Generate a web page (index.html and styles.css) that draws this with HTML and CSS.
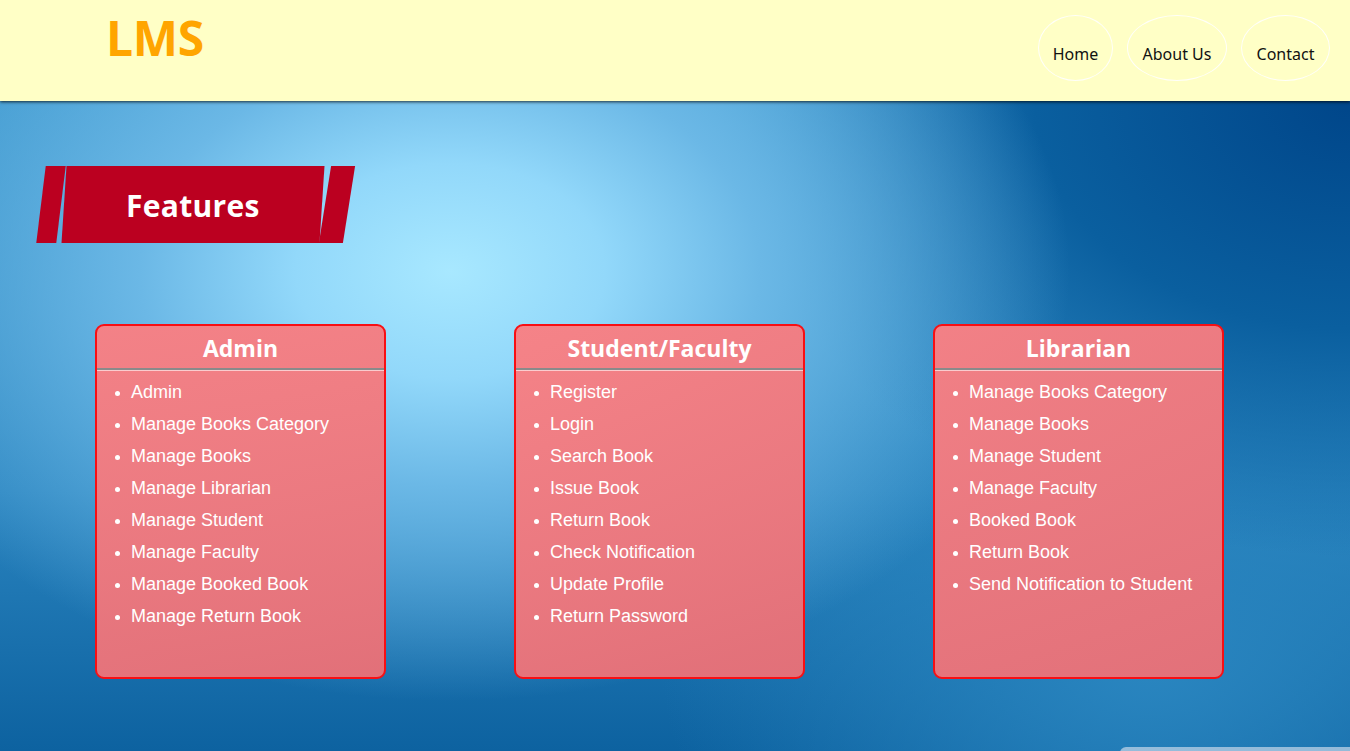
FILE: index.html
```html
<!DOCTYPE html>
<html>
<head>
<meta charset="utf-8">
<link rel="stylesheet" href="styles.css">
</head>
<body>
<header class="topbar">
  <div class="logo">LMS</div>
  <nav class="nav">
    <a class="nav-item nav-home" href="#">Home</a>
    <a class="nav-item nav-about" href="#">About Us</a>
    <a class="nav-item nav-contact" href="#">Contact</a>
  </nav>
</header>
<main class="main">
  <div class="banner">
    <span class="stripe stripe-left"></span>
    <span class="banner-main"><span class="banner-text">Features</span></span>
    <span class="stripe stripe-right"></span>
  </div>
  <section class="cards">
    <div class="card">
      <h2 class="card-title">Admin</h2>
      <ul class="card-list">
        <li>Admin</li>
        <li>Manage Books Category</li>
        <li>Manage Books</li>
        <li>Manage Librarian</li>
        <li>Manage Student</li>
        <li>Manage Faculty</li>
        <li>Manage Booked Book</li>
        <li>Manage Return Book</li>
      </ul>
    </div>
    <div class="card">
      <h2 class="card-title">Student/Faculty</h2>
      <ul class="card-list">
        <li>Register</li>
        <li>Login</li>
        <li>Search Book</li>
        <li>Issue Book</li>
        <li>Return Book</li>
        <li>Check Notification</li>
        <li>Update Profile</li>
        <li>Return Password</li>
      </ul>
    </div>
    <div class="card">
      <h2 class="card-title">Librarian</h2>
      <ul class="card-list">
        <li>Manage Books Category</li>
        <li>Manage Books</li>
        <li>Manage Student</li>
        <li>Manage Faculty</li>
        <li>Booked Book</li>
        <li>Return Book</li>
        <li>Send Notification to Student</li>
      </ul>
    </div>
  </section>
  <div class="watermark"></div>
</main>
</body>
</html>
```
FILE: styles.css
```css
* { box-sizing: border-box; }
html, body { margin: 0; padding: 0; }
body {
  width: 1350px;
  height: 751px;
  overflow: hidden;
  font-family: "Liberation Sans", Arial, sans-serif;
  background: #0a5c9a;
}
.topbar {
  position: relative;
  z-index: 2;
  height: 101px;
  background: #ffffc6;
  box-shadow: 0 1px 3px rgba(0,0,0,0.75);
  display: flex;
  justify-content: space-between;
  align-items: flex-start;
  padding: 0 20px 0 106px;
}
.logo {
  font-family: "Open Sans", "Noto Sans", sans-serif;
  font-weight: 700;
  font-size: 48px;
  color: #ffa500;
  line-height: 1;
  margin-top: 14px;
  letter-spacing: -0.3px;
}
.nav {
  display: flex;
  gap: 14px;
  margin-top: 15px;
}
.nav-item {
  display: flex;
  align-items: center;
  justify-content: center;
  height: 66px;
  border: 1px solid rgba(255,255,255,0.9);
  border-radius: 50%;
  color: #111;
  text-decoration: none;
  font-family: "Noto Sans", "Open Sans", sans-serif;
  font-size: 16px;
  padding-top: 11px;
}
.nav-home { width: 75px; }
.nav-about { width: 100px; }
.nav-contact { width: 89px; }

.main {
  position: relative;
  height: 650px;
  background:
    radial-gradient(ellipse 620px 430px at 450px 170px, #a8e8ff 0%, #92d8fa 25%, #6bb8e6 50%, rgba(40,130,190,0) 100%),
    radial-gradient(ellipse 900px 650px at 1350px 0px, #00468a 0%, #0a5f9f 35%, rgba(20,110,175,0) 70%),
    radial-gradient(ellipse 700px 500px at 1150px 560px, #2a86c0 0%, rgba(40,140,200,0) 70%),
    linear-gradient(180deg, #3b96cc 0%, #2a84bf 60%, #0d62a0 100%);
  padding-top: 65px;
}
.banner {
  display: flex;
  align-items: stretch;
  height: 77px;
  margin-left: 41px;
  gap: 3px;
}
.stripe, .banner-main {
  background: #bb0020;
  transform: skewX(-7deg);
}
.stripe-left { width: 20px; }
.stripe-right { width: 24px; transform: skewX(-9deg); }
.banner-main {
  width: 258px;
  display: flex;
  align-items: center;
  justify-content: center;
  transform: skewX(-3.7deg);
}
.banner-text {
  transform: skewX(3.7deg);
  color: #fff;
  font-family: "Open Sans", "Noto Sans", sans-serif;
  font-weight: 700;
  font-size: 30px;
  letter-spacing: 0.3px;
  margin-top: 2px;
}
.cards {
  display: flex;
  gap: 128px;
  margin-top: 81px;
  padding-left: 95px;
}
.card {
  width: 291px;
  height: 355px;
  border: 2px solid #f80f14;
  border-radius: 9px;
  background: linear-gradient(160deg, rgba(248,128,132,0.97) 0%, rgba(236,112,118,0.95) 100%);
  overflow: hidden;
}
.card-title {
  margin: 0;
  padding-top: 2px;
  text-align: center;
  color: #fff;
  font-family: "Open Sans", "Noto Sans", sans-serif;
  font-weight: 700;
  font-size: 23px;
  line-height: 40px;
  border-bottom: 2px solid #8a8a8a;
  box-shadow: 0 1px 0 rgba(255,255,255,0.6);
}
.card-list {
  margin: 0;
  padding: 6px 0 0 34px;
  color: #fff;
  font-size: 18px;
  line-height: 32px;
}
.card-list li::marker { font-size: 16px; }
.watermark {
  position: absolute;
  right: 0;
  bottom: -6px;
  width: 230px;
  height: 10px;
  border-radius: 6px 0 0 0;
  background: rgba(170,200,225,0.85);
}
```
